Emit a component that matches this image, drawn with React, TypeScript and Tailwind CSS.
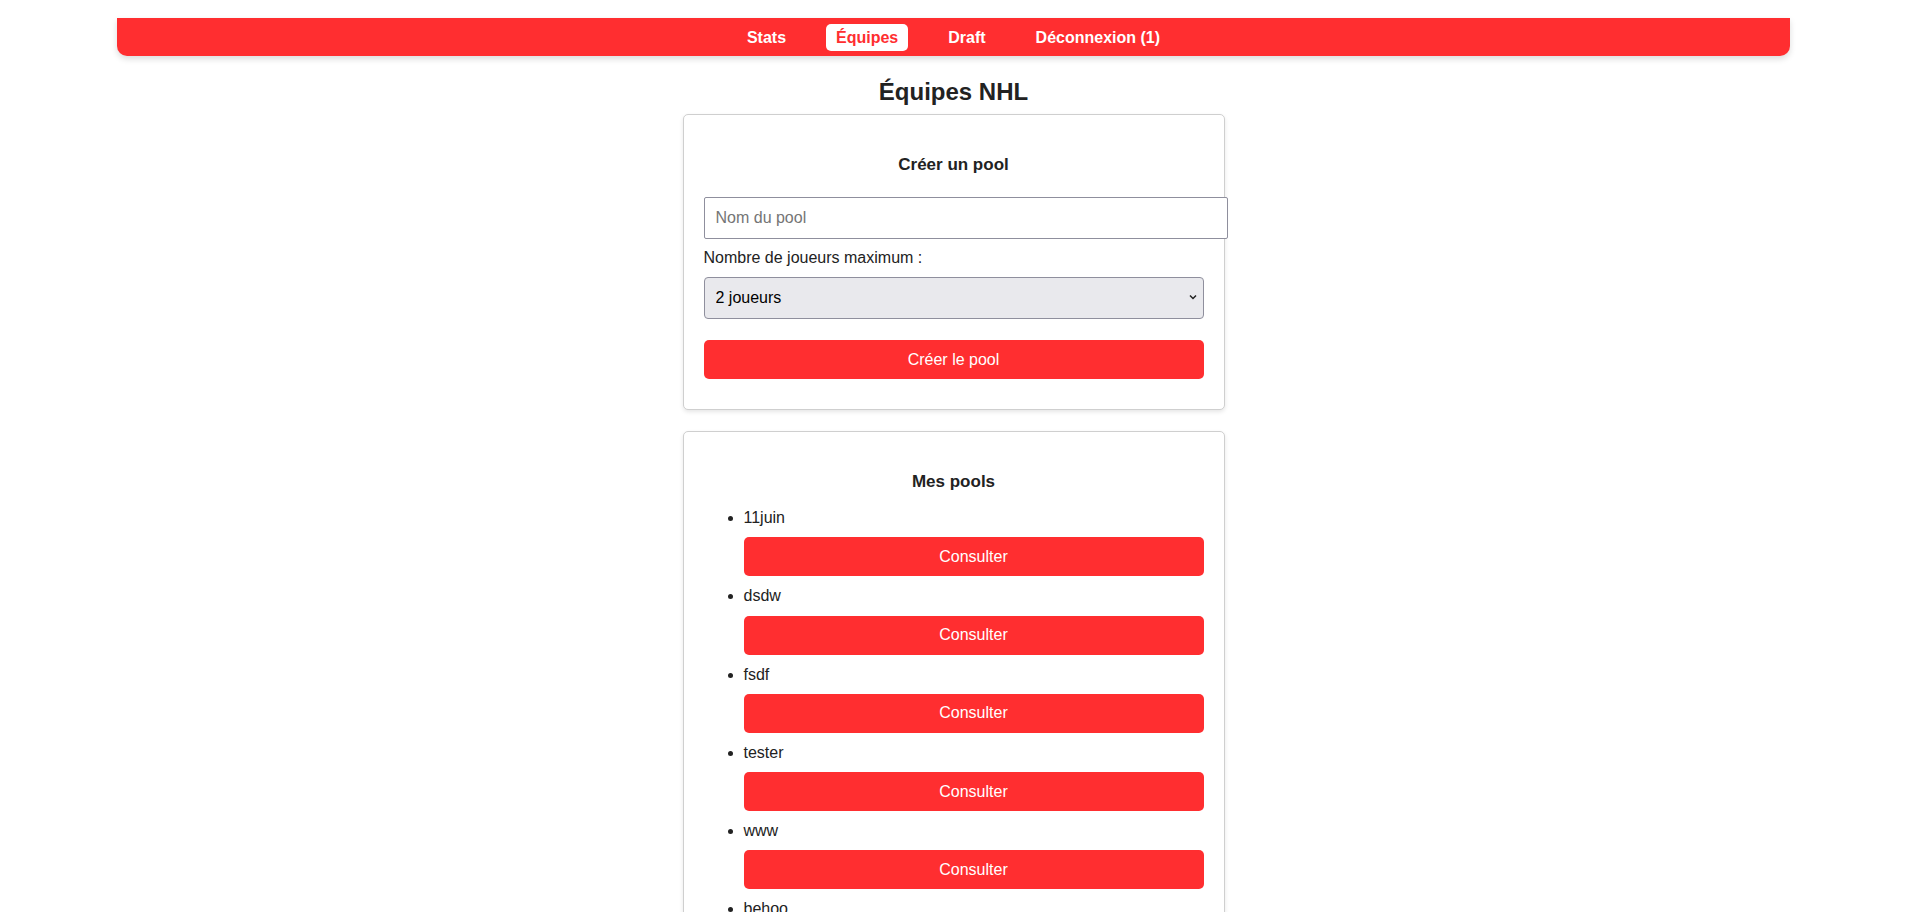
import React from "react";

const RED = "bg-[#ff2e30]";

const pools = ["11juin", "dsdw", "fsdf", "tester", "www", "behoo"];

export default function App() {
  return (
    <div
      className="min-h-screen bg-white text-[#222] pb-10"
      style={{ fontFamily: '"Liberation Sans", Arial, sans-serif' }}
    >
      <nav className="mx-[117px] mt-[18px] h-[38px] bg-[#ff2e30] rounded-b-[10px] shadow-[0_3px_6px_rgba(0,0,0,0.14)] flex items-center justify-center gap-[30px]">
        <a className="px-[10px] leading-[19px] py-[4px] text-[16px] font-bold text-white">Stats</a>
        <a className="px-[10px] leading-[19px] py-[4px] text-[16px] font-bold text-[#ff2e30] bg-white rounded-[5px]">Équipes</a>
        <a className="px-[10px] leading-[19px] py-[4px] text-[16px] font-bold text-white">Draft</a>
        <a className="px-[10px] leading-[19px] py-[4px] text-[16px] font-bold text-white">Déconnexion (1)</a>
      </nav>

      <h2 className="mt-[22px] mb-[8px] h-[28px] leading-[28px] text-center text-[24px] font-bold text-[#222]">
        Équipes NHL
      </h2>

      <section className="mx-auto w-[542px] border border-[#cfcfcf] rounded-[5px] bg-white shadow-[0_2px_4px_rgba(0,0,0,0.1)] p-5">
        <h3 className="mt-[20px] mb-[22px] leading-[20px] text-center text-[17px] font-bold text-[#222]">
          Créer un pool
        </h3>
        <input
          type="text"
          placeholder="Nom du pool"
          className="block w-[524px] h-[42px] border border-[#8f8f9d] rounded-[2px] px-[11px] text-[16px] text-[#222] placeholder:text-[#757575] bg-white outline-none"
        />
        <label className="block mt-[10px] leading-[18px] text-[16px] text-[#222]">
          Nombre de joueurs maximum :
        </label>
        <div className="relative mt-[10px] h-[42px]">
          <select className="block w-full h-[42px] appearance-none bg-[#e9e9ed] border border-[#8f8f9d] rounded-[4px] pl-[11px] text-[16px] text-black outline-none">
            <option>2 joueurs</option>
            <option>3 joueurs</option>
            <option>4 joueurs</option>
          </select>
          <svg
            className="absolute right-[7px] top-[16px] pointer-events-none"
            width="8"
            height="8"
            viewBox="0 0 8 8"
          >
            <path d="M1 2.5 L4 5.5 L7 2.5" fill="none" stroke="#222" strokeWidth="1.5" />
          </svg>
        </div>
        <button className={`block w-full mt-[21px] mb-[10px] h-[39px] ${RED} rounded-[5px] text-white text-[16px]`}>
          Créer le pool
        </button>
      </section>

      <section className="mx-auto mt-[21px] w-[542px] border border-[#cfcfcf] rounded-[5px] bg-white shadow-[0_2px_4px_rgba(0,0,0,0.1)] p-5">
        <h3 className="mt-[20px] mb-[17px] leading-[20px] text-center text-[17px] font-bold text-[#222]">
          Mes pools
        </h3>
        <ul className="list-disc list-outside pl-[40px] text-[16px] leading-[18.3px] text-[#222]">
          {pools.map((p) => (
            <li key={p} className="mb-[11px] leading-[18.3px]">
              <div className="leading-[18.3px]">{p}</div>
              <button className={`block w-full mt-[10px] h-[39px] ${RED} rounded-[5px] text-white text-[16px]`}>
                Consulter
              </button>
            </li>
          ))}
        </ul>
      </section>
    </div>
  );
}
